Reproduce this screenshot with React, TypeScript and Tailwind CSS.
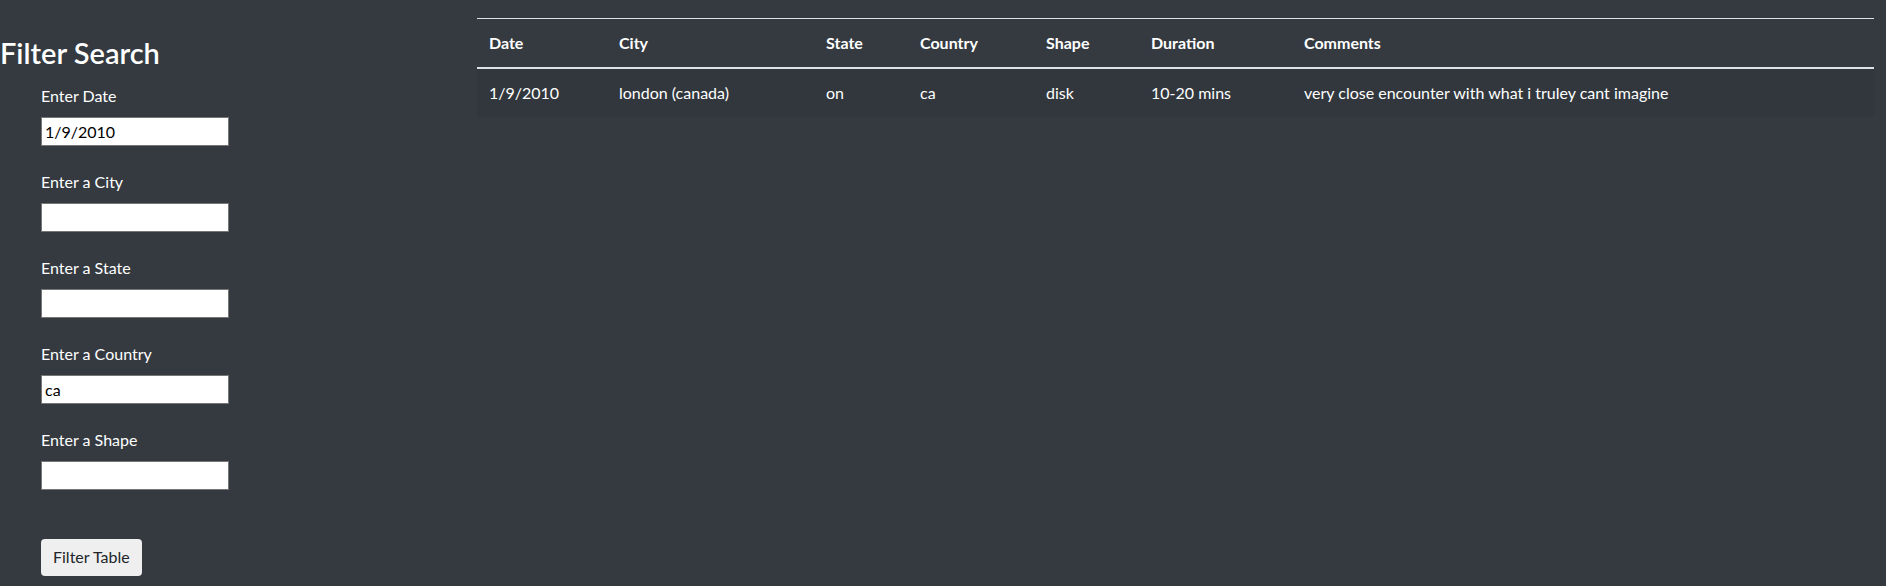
import React from "react";

const fields = [
  { label: "Enter Date", value: "1/9/2010" },
  { label: "Enter a City", value: "" },
  { label: "Enter a State", value: "" },
  { label: "Enter a Country", value: "ca" },
  { label: "Enter a Shape", value: "" },
];

const cols = [
  { name: "Date", w: "w-[130px]" },
  { name: "City", w: "w-[207px]" },
  { name: "State", w: "w-[94px]" },
  { name: "Country", w: "w-[126px]" },
  { name: "Shape", w: "w-[105px]" },
  { name: "Duration", w: "w-[153px]" },
  { name: "Comments", w: "" },
];

const row = [
  "1/9/2010",
  "london (canada)",
  "on",
  "ca",
  "disk",
  "10-20 mins",
  "very close encounter with what i truley cant imagine",
];

export default function App() {
  return (
    <div className="flex h-[586px] w-full bg-[#343a40] font-['Lato','Open_Sans',sans-serif] text-white text-[16px] leading-6">
      <aside className="w-[477px] shrink-0">
        <h3 className="mt-[36px] text-[29px] leading-[1.2] font-semibold">Filter Search</h3>
        <ul className="mt-[13px] pl-[41px] flex flex-col gap-[24px]">
          {fields.map((f) => (
            <li key={f.label} className="flex flex-col items-start">
              <label className="mb-[9px] leading-6">{f.label}</label>
              <input
                type="text"
                defaultValue={f.value}
                className="h-[29px] w-[188px] border border-[#767676] bg-white px-[3px] text-[16px] text-black outline-none"
              />
            </li>
          ))}
        </ul>
        <button className="mt-[49px] ml-[41px] h-[37px] rounded-[4px] bg-[#efefef] px-3 text-[16px] text-[#212529]">
          Filter Table
        </button>
      </aside>
      <main className="flex-1 pr-[12px] pt-[18px]">
        <table className="w-full table-fixed border-collapse">
          <thead>
            <tr>
              {cols.map((c) => (
                <th
                  key={c.name}
                  className={`${c.w} border-t border-b-2 border-t-[#dee2e6] border-b-[#dee2e6] p-3 text-left font-bold leading-6`}
                >
                  {c.name}
                </th>
              ))}
            </tr>
          </thead>
          <tbody>
            <tr className="bg-[#31373d]">
              {row.map((v, i) => (
                <td key={i} className="p-3 leading-6">
                  {v}
                </td>
              ))}
            </tr>
          </tbody>
        </table>
      </main>
    </div>
  );
}
